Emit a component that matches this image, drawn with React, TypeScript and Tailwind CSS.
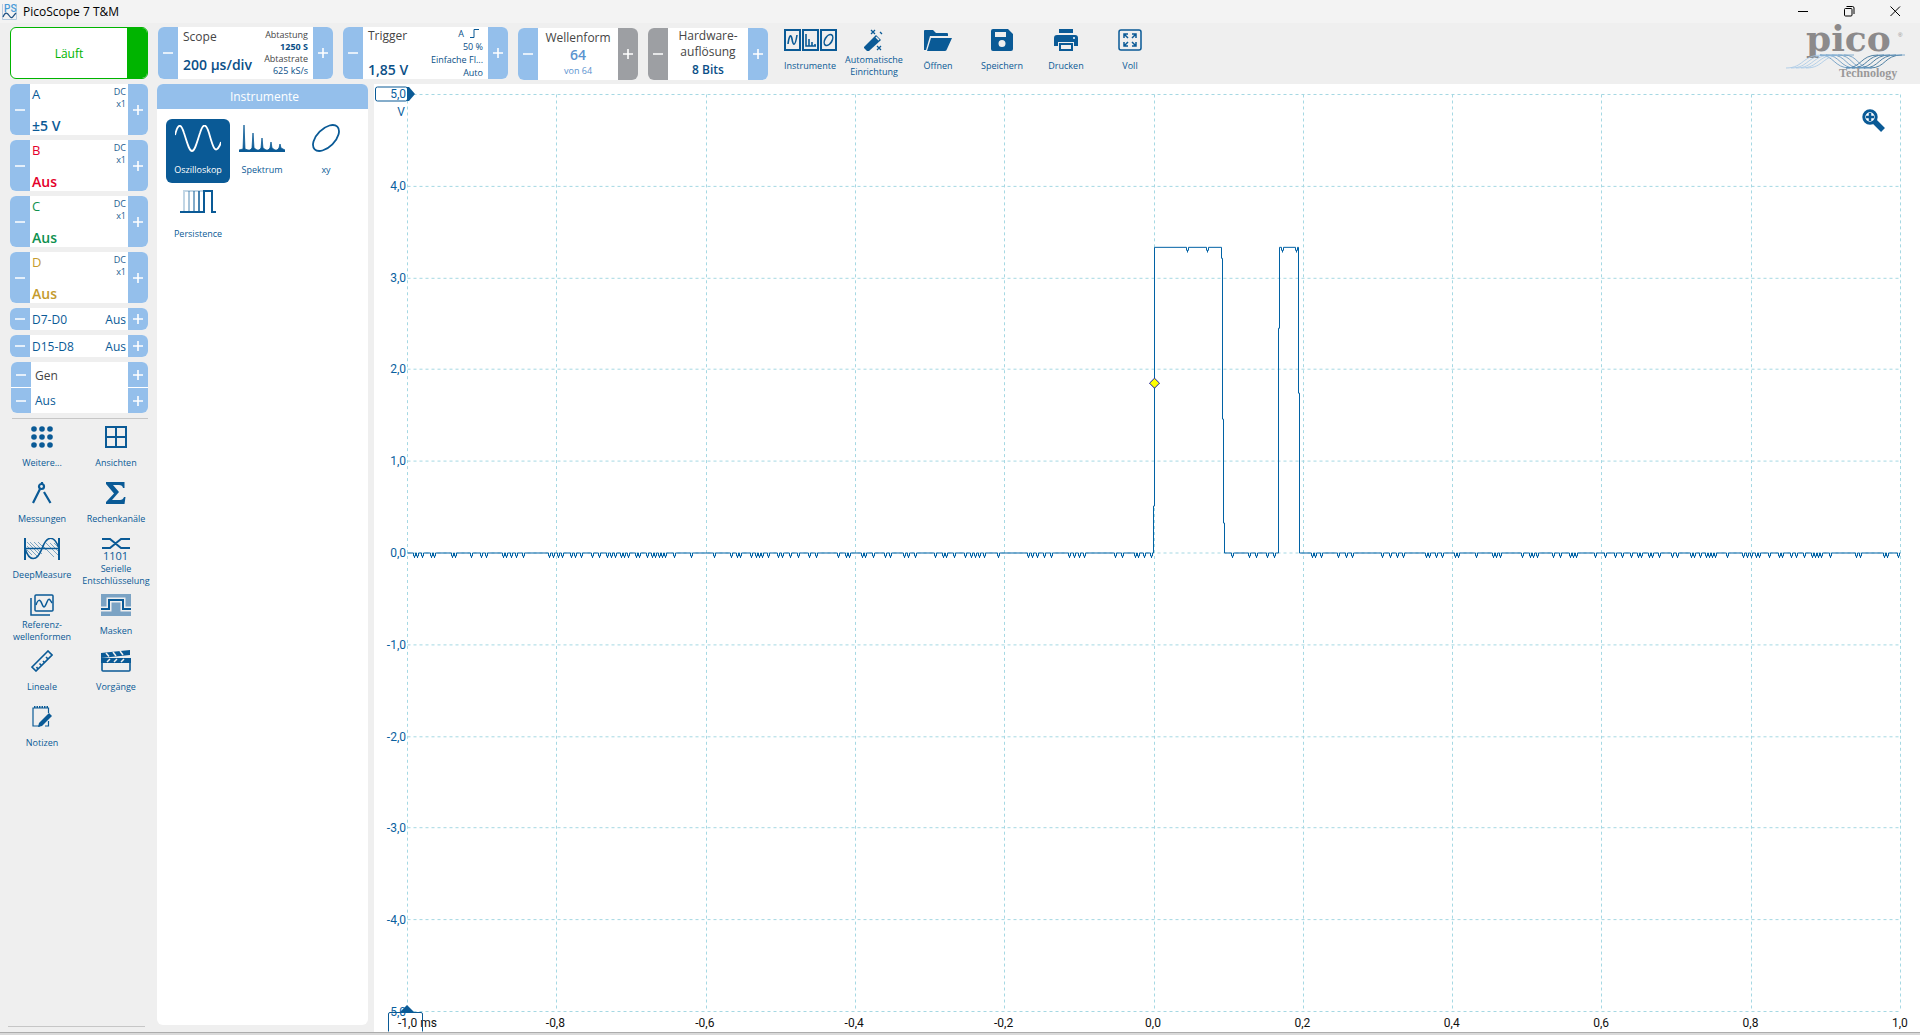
import type { ReactNode } from "react";

const BLUE = "#0a5a96";

// x positions of the one-LSB noise dips on the baseline, in plot units
const NOISE = [
  7, 10, 15, 24, 27, 45, 48, 64, 74, 79, 96, 99, 104, 109, 116, 142, 146, 151, 155, 164, 168, 174,
  185, 192, 200, 204, 208, 214, 217, 221, 229, 232, 240, 245, 248, 252, 255, 258, 267, 284, 307,
  324, 330, 333, 344, 349, 352, 355, 361, 371, 375, 383, 391, 402, 409, 431, 439, 442, 455, 458,
  466, 478, 483, 497, 501, 508, 528, 536, 539, 547, 558, 564, 568, 572, 577, 591, 621, 625, 630,
  637, 644, 662, 667, 672, 677, 708, 715, 728, 731, 737, 744,
];
const NOISE_LOW = [825, 842, 849, 860, 867];
const NOISE_END = [
  905, 908, 914, 931, 939, 945, 975, 983, 990, 996, 1019, 1022, 1029, 1035, 1048, 1051, 1069,
  1086, 1089, 1093, 1115, 1123, 1126, 1130, 1146, 1153, 1163, 1166, 1169, 1188, 1198, 1208, 1215,
  1224, 1231, 1234, 1242, 1245, 1252, 1265, 1270, 1284, 1287, 1293, 1299, 1302, 1305, 1308, 1320,
  1336, 1340, 1344, 1349, 1352, 1362, 1372, 1375, 1384, 1389, 1397, 1405, 1408, 1411, 1414, 1423,
  1449, 1453, 1477, 1480, 1491,
];

const dips = (xs: number[], y: number) =>
  xs.map((x) => `H${x - 1}V${y + 3}H${x}V${y + 5}V${y + 3}H${x + 1}V${y}`).join("");

const TRACE =
  `M0 459${dips(NOISE, 459)}H746V412H747V153${dips([780, 800], 153)}H814V164H815V325H816V429H817V459` +
  `${dips(NOISE_LOW, 459)}H871V234H872V153${dips([875, 889], 153)}H891V299H892V459${dips(NOISE_END, 459)}H1493`;

const Y_LABELS = ["5,0", "4,0", "3,0", "2,0", "1,0", "0,0", "-1,0", "-2,0", "-3,0", "-4,0", "5,0"];
const X_LABELS = ["-1,0 ms", "-0,8", "-0,6", "-0,4", "-0,2", "0,0", "0,2", "0,4", "0,6", "0,8", "1,0"];

function Step({ plus, gray }: { plus?: boolean; gray?: boolean }) {
  return (
    <button
      type="button"
      aria-label={plus ? "Erhöhen" : "Verringern"}
      className={`flex w-5 shrink-0 items-center justify-center ${gray ? "bg-[#9d9fa3]" : "bg-[#94bfeb]"}`}
    >
      <svg width="10" height="10" viewBox="0 0 10 10" stroke="#fff" strokeWidth="1.6">
        <path d={plus ? "M0 5H10M5 0V10" : "M0 5H10"} />
      </svg>
    </button>
  );
}

function Tool({ label, children }: { label: ReactNode; children: ReactNode }) {
  return (
    <button type="button" className="flex h-14 flex-col items-center text-[#0a5a96]">
      <span className="flex h-[22px] items-center">{children}</span>
      <span className="flex h-[29px] items-center text-center text-[9px] leading-3 whitespace-nowrap">
        <span>{label}</span>
      </span>
    </button>
  );
}

function Channel({ name, value, color }: { name: string; value: string; color: string }) {
  return (
    <div className="flex h-[51px] overflow-hidden rounded-md bg-white">
      <Step />
      <div className={`flex flex-1 justify-between px-0.5 ${color}`}>
        <div className="flex flex-col justify-between pt-0.5">
          <span className="text-[13px] leading-4">{name}</span>
          <span className="text-sm leading-[18px] font-semibold">{value}</span>
        </div>
        <div className="pt-0.5 text-right text-[9px] leading-3 text-[#1d5c8f]">
          <div>DC</div>
          <div>x1</div>
        </div>
      </div>
      <Step plus />
    </div>
  );
}

function Digital({ name }: { name: string }) {
  return (
    <div className="flex h-[22px] overflow-hidden rounded-md bg-white text-xs text-[#0a5a96]">
      <Step />
      <div className="flex flex-1 items-center justify-between px-0.5 pt-px">
        <span>{name}</span>
        <span>Aus</span>
      </div>
      <Step plus />
    </div>
  );
}

function TitleBar() {
  return (
    <header className="flex h-[23px] shrink-0 items-center bg-[#f3f3f3] pr-0.5 pl-0.5 text-black">
      <svg width="15" height="17" viewBox="0 0 15 17" fill="none">
        <path d="M.5 1V16.5H14.5V1" stroke="#b5cbe0" />
        <text x="2" y="9" fontSize="10" fontWeight="500" fontFamily="Roboto, sans-serif" fill="#4a9ad8">PS</text>
        <path d="M1 14C3 9 5 9 7.500 13S11 13 14 10" stroke="#1d4f80" strokeWidth="1.2" />
      </svg>
      <h1 className="ml-1.5 flex-1 text-xs">PicoScope 7 T&amp;M</h1>
      <div className="flex h-full">
        <button type="button" aria-label="Minimieren" className="flex w-[46px] items-center justify-center">
          <svg width="11" height="11" viewBox="0 0 11 11" stroke="#000"><path d="M0 5.500H10" /></svg>
        </button>
        <button type="button" aria-label="Verkleinern" className="flex w-[46px] items-center justify-center">
          <svg width="11" height="11" viewBox="0 0 11 11" fill="none" stroke="#000">
            <rect x=".5" y="2.500" width="7.500" height="7.500" rx="1" />
            <path d="M2.500 .5H8.500Q10 .5 10 2V8" />
          </svg>
        </button>
        <button type="button" aria-label="Schließen" className="flex w-[46px] items-center justify-center">
          <svg width="11" height="11" viewBox="0 0 11 11" stroke="#000"><path d="M.5 .5L10 10M10 .5L.5 10" /></svg>
        </button>
      </div>
    </header>
  );
}

function PicoLogo() {
  const lines = [0, 1, 2, 3, 4];
  return (
    <svg
      className="overflow-visible"
      width="122"
      height="54"
      viewBox="0 0 122 54"
      fill="none"
      role="img"
      aria-label="Pico Technology"
    >
      <text x="20" y="24" fontSize="36" fontWeight="700" fontFamily="'DejaVu Serif', serif" fill="#8c8a8b">pico</text>
      <text x="112" y="10" fontSize="6" fontFamily="'Liberation Sans', sans-serif" fill="#8c8a8b">®</text>
      {lines.map((i) => (
        <g key={i} strokeWidth=".8">
          <path d={`M${i * 5} 41C${18 + i * 5} 41 ${16 + i * 5} 28 ${36 + i * 5} 28`} stroke="#a3c6e6" />
          <path d={`M${34 + i * 6} 28C${48 + i * 6} 28 ${48 + i * 6} 41 ${64 + i * 5} 41`} stroke="#5e92bd" />
          <path d={`M${60 + i * 6} 41C${76 + i * 6} 41 ${74 + i * 6} 28 ${92 + i * 6} 28`} stroke="#27638f" />
        </g>
      ))}
      <path d="M34 28H68M60 41H86M92 28H119" stroke="#6b9cc4" strokeWidth=".8" />
      <text x="53" y="50" fontSize="12" fontWeight="700" fontFamily="'Liberation Serif', serif" fill="#9a9899">Technology</text>
    </svg>
  );
}

function Toolbar() {
  return (
    <div className="flex h-[61px] shrink-0 items-start pt-1 pl-2.5">
      <button
        type="button"
        className="flex h-[52px] w-[138px] overflow-hidden rounded-md border border-[#00b400] bg-white text-xs text-[#00b400]"
      >
        <span className="flex flex-1 items-center justify-center self-stretch pt-px">Läuft</span>
        <span className="w-5 self-stretch bg-[#00b400]" />
      </button>

      <div className="ml-2.5 flex h-[52px] w-[175px] overflow-hidden rounded-md bg-white">
        <Step />
        <div className="flex flex-1 justify-between px-[5px] text-[#0a4f87]">
          <div className="flex flex-col justify-between pt-0.5 pb-1 whitespace-nowrap">
            <span className="text-xs leading-4 text-[#454545]">Scope</span>
            <span className="text-sm leading-5 font-semibold">200 µs/div</span>
          </div>
          <div className="pt-0.5 text-right text-[9px] leading-3 whitespace-nowrap">
            <div className="text-[#454545]">Abtastung</div>
            <div className="font-bold">1250 S</div>
            <div className="text-[#454545]">Abtastrate</div>
            <div>625 kS/s</div>
          </div>
        </div>
        <Step plus />
      </div>

      <div className="ml-2.5 flex h-[52px] w-[165px] overflow-hidden rounded-md bg-white">
        <Step />
        <div className="flex flex-1 justify-between px-[5px] text-[#0a4f87]">
          <div className="flex flex-col justify-between whitespace-nowrap">
            <span className="text-xs leading-[18px] text-[#454545]">Trigger</span>
            <span className="text-sm leading-[18px] font-semibold">1,85 V</span>
          </div>
          <div className="flex flex-col items-end text-[9px] leading-[13px] whitespace-nowrap">
            <span className="flex items-center gap-1.5 pr-1">
              A
              <svg width="9" height="9" viewBox="0 0 9 9" fill="none" stroke={BLUE}><path d="M0 8.500H4V.5H9" /></svg>
            </span>
            <span>50 %</span>
            <span>Einfache Fl...</span>
            <span>Auto</span>
          </div>
        </div>
        <Step plus />
      </div>

      <div className="mt-px ml-2.5 flex h-[52px] w-[120px] overflow-hidden rounded-md bg-white">
        <Step />
        <div className="flex flex-1 flex-col items-center pt-0.5 text-[#5b93cf]">
          <span className="text-xs leading-4 text-[#454545]">Wellenform</span>
          <span className="text-sm leading-[18px] font-semibold">64</span>
          <span className="text-[9px] leading-[14px]">von 64</span>
        </div>
        <Step plus gray />
      </div>

      <div className="mt-px ml-2.5 flex h-[52px] w-[120px] overflow-hidden rounded-md bg-white">
        <Step gray />
        <div className="flex flex-1 flex-col items-center text-xs leading-4 text-[#454545]">
          <span>Hardware-</span>
          <span>auflösung</span>
          <span className="pt-0.5 font-semibold text-[#0a4f87]">8 Bits</span>
        </div>
        <Step plus />
      </div>

      <nav className="ml-2.5 grid grid-cols-[repeat(6,64px)] pt-0.5">
        <Tool label="Instrumente">
          <svg width="53" height="22" viewBox="0 0 53 22" fill="none" stroke={BLUE} strokeWidth="2">
            <rect x="1" y="1" width="15" height="20" />
            <rect x="19" y="1" width="15" height="20" />
            <rect x="37" y="1" width="15" height="20" />
            <path d="M4 15C5 7 7 4 8 10S11 19 13 6" strokeWidth="1.6" />
            <path d="M22 5V17H32M25 10V17M28 13V17M31 15V17" strokeWidth="1.6" />
            <ellipse cx="44.5" cy="11" rx="3.500" ry="6" transform="rotate(30 44.5 11)" strokeWidth="1.6" />
          </svg>
        </Tool>
        <Tool label={<>Automatische<br />Einrichtung</>}>
          <svg width="20" height="22" viewBox="0 0 20 22" fill={BLUE}>
            <path d="M0 18L12 6L17 11L5 22H3L0 19Z" />
            <path d="M12 8L15 11" stroke="#efefef" strokeWidth="1.5" />
            <path d="M7 1L11 5M11 1L7 5M13 17L17 21M17 17L13 21M16 3L18 5" stroke={BLUE} strokeWidth="1.3" />
          </svg>
        </Tool>
        <Tool label="Öffnen">
          <svg width="28" height="22" viewBox="0 0 28 22" fill={BLUE}>
            <path d="M0 21V2Q0 1 1 1H9L12 4H23Q24 4 24 5V7H6L2 21Z" />
            <path d="M7 9H28L23 20Q22.500 22 21 22H3Z" />
          </svg>
        </Tool>
        <Tool label="Speichern">
          <svg width="22" height="22" viewBox="0 0 22 22" fill={BLUE} fillRule="evenodd">
            <path d="M2 0H17L22 5V20Q22 22 20 22H2Q0 22 0 20V2Q0 0 2 0ZM4 3V8H15V3ZM11 11A3.500 3.500 0 1 0 11 18A3.500 3.500 0 1 0 11 11Z" />
          </svg>
        </Tool>
        <Tool label="Drucken">
          <svg width="24" height="22" viewBox="0 0 24 22" fill={BLUE}>
            <path d="M5 0H19V4H5Z" />
            <path d="M3 6H21Q24 6 24 9V17H20V13H4V17H0V9Q0 6 3 6Z" />
            <path d="M6 15H18V21H6Z" fill="none" stroke={BLUE} strokeWidth="2" />
            <circle cx="20" cy="9" r="1" fill="#fff" />
          </svg>
        </Tool>
        <Tool label="Voll">
          <svg width="24" height="22" viewBox="0 0 24 22" fill="none" stroke={BLUE} strokeWidth="1.5">
            <rect x="1" y="1" width="22" height="20" rx="2" />
            <path d="M6 9V5H10M6 5L10 9M14 5H18V9M18 5L14 9M6 13V17H10M6 17L10 13M18 13V17H14M18 17L14 13" />
          </svg>
        </Tool>
      </nav>

      <div className="ml-auto pr-3">
        <PicoLogo />
      </div>
    </div>
  );
}

function Tools() {
  return (
    <nav className="-mx-[5px] grid grid-cols-2 pt-[7px]">
      <Tool label="Weitere...">
        <svg width="22" height="22" viewBox="0 0 22 22" fill={BLUE}>
          {[3, 11, 19].map((y) => [3, 11, 19].map((x) => <circle key={`${x}-${y}`} cx={x} cy={y} r="2.800" />))}
        </svg>
      </Tool>
      <Tool label="Ansichten">
        <svg width="22" height="22" viewBox="0 0 22 22" fill="none" stroke={BLUE} strokeWidth="2">
          <path d="M1 1H21V21H1ZM11 1V21M1 11H21" />
        </svg>
      </Tool>
      <Tool label="Messungen">
        <svg width="20" height="22" viewBox="0 0 20 22" fill="none" stroke={BLUE} strokeWidth="2.200">
          <circle cx="9.500" cy="4.500" r="2.500" />
          <path d="M8 7L1 21M12 10L18.500 21M10 0V2" />
        </svg>
      </Tool>
      <Tool label="Rechenkanäle">
        <svg width="20" height="22" viewBox="0 0 20 22" fill={BLUE}>
          <path d="M0 0H18.500V6H17Q16.500 3 13 3H7L13 10L6 18H14Q17 18 18 15H19.500L18.500 22H0V20L8 11.500L0 2Z" />
        </svg>
      </Tool>
      <Tool label="DeepMeasure">
        <svg width="36" height="22" viewBox="0 0 36 22" fill="none" stroke={BLUE}>
          <path
            d="M3 4L16 17M3 8L14 19M6 4L18 16M10 4L18 12M14 4L22 12M18 7L30 19M3 12L8 17M22 5L34 17M26 5L34 13M30 5L34 9"
            strokeWidth=".5"
          />
          <path d="M1 0V22M35 0V22" strokeWidth="2" />
          <path d="M1 10.500H35" strokeWidth="1.500" />
          <path d="M1 10C5 24 13 24 18 10.500S30 -3 35 10" strokeWidth="1.600" />
        </svg>
      </Tool>
      <Tool label={<>Serielle<br />Entschlüsselung</>}>
        <svg className="overflow-visible" width="28" height="22" viewBox="0 0 28 22" fill="none" stroke={BLUE} strokeWidth="2">
          <path d="M0 1H8L19 10H28M0 10H8L19 1H28" />
          <text x="1" y="22" fontSize="11" fontFamily="'Open Sans', sans-serif" fill={BLUE} stroke="none">1101</text>
        </svg>
      </Tool>
      <Tool label={<>Referenz-<br />wellenformen</>}>
        <svg width="24" height="22" viewBox="0 0 24 22" fill="none" stroke={BLUE} strokeWidth="1.500">
          <rect x="5" y="1" width="18" height="16" rx="1" />
          <path d="M1 4V21H20M6 11C8 5 10 5 12 10S15 13 17 8S20 6 22 9" />
        </svg>
      </Tool>
      <Tool label="Masken">
        <svg width="30" height="22" viewBox="0 0 30 22" fill="none">
          <path d="M0 0H30V22H0Z" fill="#7ba3c4" />
          <path d="M0 15H8V6H22V15H30" stroke="#efefef" strokeWidth="5" />
          <path d="M0 15H8V6H22V15H30" stroke={BLUE} strokeWidth="2" />
        </svg>
      </Tool>
      <Tool label="Lineale">
        <svg width="22" height="22" viewBox="0 0 22 22" fill="none" stroke={BLUE} strokeWidth="1.600">
          <path d="M1 17L17 1L21 5L5 21Z" />
          <path d="M7 19L5.500 17M10.500 15.500L8.500 13.500M13.500 12.500L12 11M17 9L15 7" />
        </svg>
      </Tool>
      <Tool label="Vorgänge">
        <svg width="30" height="22" viewBox="0 0 30 22" fill={BLUE}>
          <path d="M0 3L29 0V5L0 8ZM0 8H30V13H0Z" />
          <path d="M1 12V20Q1 21 2 21H28Q29 21 29 20V12" fill="none" stroke={BLUE} strokeWidth="1.600" />
          <path d="M5 3L8 6.500M12 2L15 6M19 1L22 5M6 12L9 9M13 12L16 9M20 12L23 9" stroke="#efefef" strokeWidth="1.500" />
        </svg>
      </Tool>
      <Tool label="Notizen">
        <svg width="20" height="22" viewBox="0 0 20 22" fill="none" stroke={BLUE}>
          <path d="M16.500 7V2H1V20H8M13 20H16.500V15" strokeWidth="1.200" />
          <path d="M2 1H16" strokeWidth="2" strokeDasharray="1.500 1" />
          <path d="M17 7L20 10L10 20L6 21L7 17Z" fill={BLUE} stroke="none" />
        </svg>
      </Tool>
    </nav>
  );
}

function Sidebar() {
  return (
    <aside className="flex w-[157px] shrink-0 flex-col pr-[9px] pl-2.5">
      <div className="flex flex-col gap-[5px]">
        <Channel name="A" value="±5 V" color="text-[#0a5a96]" />
        <Channel name="B" value="Aus" color="text-[#e4002b]" />
        <Channel name="C" value="Aus" color="text-[#0f9150]" />
        <Channel name="D" value="Aus" color="text-[#c59b2d]" />
        <Digital name="D7-D0" />
        <Digital name="D15-D8" />
        <div className="ml-px flex h-[51px] flex-col gap-px overflow-hidden rounded-md bg-white text-xs">
          <div className="flex flex-1">
            <Step />
            <span className="flex flex-1 items-center pt-0.5 pl-1 text-[#454545]">Gen</span>
            <Step plus />
          </div>
          <div className="flex flex-1">
            <Step />
            <span className="flex flex-1 items-center pl-1 text-[#0a5a96]">Aus</span>
            <Step plus />
          </div>
        </div>
      </div>
      <hr className="mt-[5px] ml-0.5 border-[#c6c6c6]" />
      <Tools />
      <hr className="mt-auto mr-[3px] mb-[5px] -ml-0.5 border-[#c6c6c6]" />
    </aside>
  );
}

function Instrument({ label, active, children }: { label: string; active?: boolean; children: ReactNode }) {
  return (
    <button
      type="button"
      className={`flex h-16 w-16 flex-col items-center rounded-md pt-1 ${active ? "bg-[#0a5a96] text-white" : "text-[#0a5a96]"}`}
    >
      <span className="flex h-[30px] items-center">{children}</span>
      <span className="mt-2.5 text-[9px] leading-[14px]">{label}</span>
    </button>
  );
}

function Instruments() {
  return (
    <section className="mr-1.5 mb-[7px] flex w-[211px] shrink-0 flex-col overflow-hidden rounded-md bg-white">
      <h2 className="flex h-[25px] items-center justify-center bg-[#94bfeb] pt-px pl-1 text-xs text-white">Instrumente</h2>
      <div className="grid grid-cols-[repeat(3,64px)] px-[9px] pt-2.5">
        <Instrument label="Oszilloskop" active>
          <svg width="46" height="27" viewBox="0 0 46 27" fill="none" stroke="#fff" strokeWidth="1.800">
            <path d="M0 10C3 -2 6 -2 9 8C12 17 14 26 17 26C20 26 22 17 25 8C28 -2 31 -2 34 8C38 22 40 30 45 20L46 17" />
          </svg>
        </Instrument>
        <Instrument label="Spektrum">
          <svg width="46" height="27" viewBox="0 0 46 27" fill={BLUE}>
            <path d="M0 25L4 24L5 0L6 24L9 25H11L13 23L14 8L15 23L18 25H20L22 23L23 13L24 23L27 25H29L31 23L32 17L33 23L36 25H38L40 23L41 19L42 23L46 25V27H0Z" stroke={BLUE} strokeWidth=".8" />
          </svg>
        </Instrument>
        <Instrument label="xy">
          <svg width="28" height="28" viewBox="0 0 28 28" fill="none" stroke={BLUE} strokeWidth="1.800">
            <ellipse cx="14" cy="14" rx="9" ry="16" transform="rotate(45 14 14)" />
          </svg>
        </Instrument>
        <Instrument label="Persistence">
          <svg width="36" height="24" viewBox="0 0 36 24" fill="none" stroke={BLUE} strokeWidth="2">
            <path d="M4 22V1H24" opacity=".25" />
            <path d="M9 22V1" opacity=".35" />
            <path d="M14 22V1" opacity=".5" />
            <path d="M19 22V1" opacity=".75" />
            <path d="M0 22H24V1H32V22H36" />
          </svg>
        </Instrument>
      </div>
    </section>
  );
}

function Chart() {
  const ticks = [0, 1, 2, 3, 4, 5, 6, 7, 8, 9, 10];
  return (
    <main className="relative flex min-w-0 flex-1 flex-col bg-white pt-2.5 pr-[19px] font-[Roboto,sans-serif] text-xs">
      <div className="flex min-h-0 flex-1">
        <div className="relative flex w-[33px] shrink-0 flex-col justify-between pr-px text-right text-[#0a5f9e]">
          {Y_LABELS.map((label, i) => (
            <div key={i} className="flex h-0 items-center justify-end">{label}</div>
          ))}
          <span className="absolute top-2.5 right-0.5">V</span>
          <svg className="absolute -top-2 left-px" width="40" height="16" viewBox="0 0 40 16" fill="none" aria-hidden="true">
            <rect x=".5" y="1" width="32" height="14" rx="2" stroke={BLUE} />
            <path d="M32 1H34L40 8L34 15H32Z" fill={BLUE} />
          </svg>
        </div>
        <svg
          className="h-full min-w-0 flex-1 overflow-visible"
          viewBox="0 0 1494 919"
          preserveAspectRatio="none"
          fill="none"
          role="img"
          aria-label="Kanal A"
        >
          <g transform="translate(.5 .5)" shapeRendering="crispEdges">
            <g stroke="#a5d8e3" strokeDasharray="3 3">
              {ticks.map((i) => (
                <path key={i} d={`M${Math.round(i * 149.3)} 0V918M0 ${Math.round(i * 91.8)}H1493`} />
              ))}
            </g>
            <path d={TRACE} stroke="#0061a5" />
          </g>
          <path d="M747.5 284.500L752.5 289.500L747.5 294.500L742.5 289.500Z" fill="#ff0" stroke="#1a1aa0" />
        </svg>
      </div>
      <div className="relative mr-px ml-8 flex h-5 shrink-0 justify-between pt-0.5 text-[#111]">
        <svg className="absolute -top-[7px] -left-[19px]" width="37" height="27" viewBox="0 0 37 27" fill="none" aria-hidden="true">
          <path d="M1.500 26.500V9Q1.500 7.500 3 7.500H34Q35.500 7.500 35.500 9V26.500" stroke={BLUE} />
          <path d="M13 7L20 0L27 7Z" fill={BLUE} />
        </svg>
        {X_LABELS.map((label, i) => (
          <div key={label} className={`flex w-0 items-center whitespace-nowrap ${i === 0 ? "-ml-2 mr-2 justify-start" : "justify-center"}`}>
            {label}
          </div>
        ))}
      </div>
      <button type="button" aria-label="Vergrößern" className="absolute top-6 right-[34px]">
        <svg width="25" height="25" viewBox="0 0 25 25" fill="none">
          <path d="M13 13L22 22" stroke={BLUE} strokeWidth="5.500" />
          <circle cx="9" cy="9" r="6.200" fill="#fff" stroke={BLUE} strokeWidth="3" />
          <path d="M5 9H13M9 5V13" stroke={BLUE} strokeWidth="2.500" />
        </svg>
      </button>
    </main>
  );
}

export default function App() {
  return (
    <div className="flex h-screen flex-col bg-[#efefef] font-['Open_Sans','Noto_Sans',sans-serif]">
      <TitleBar />
      <Toolbar />
      <div className="flex min-h-0 flex-1">
        <Sidebar />
        <Instruments />
        <Chart />
      </div>
      <footer className="h-[3px] shrink-0 border-t border-[#acacac] bg-[#d9d9d9]" />
    </div>
  );
}
